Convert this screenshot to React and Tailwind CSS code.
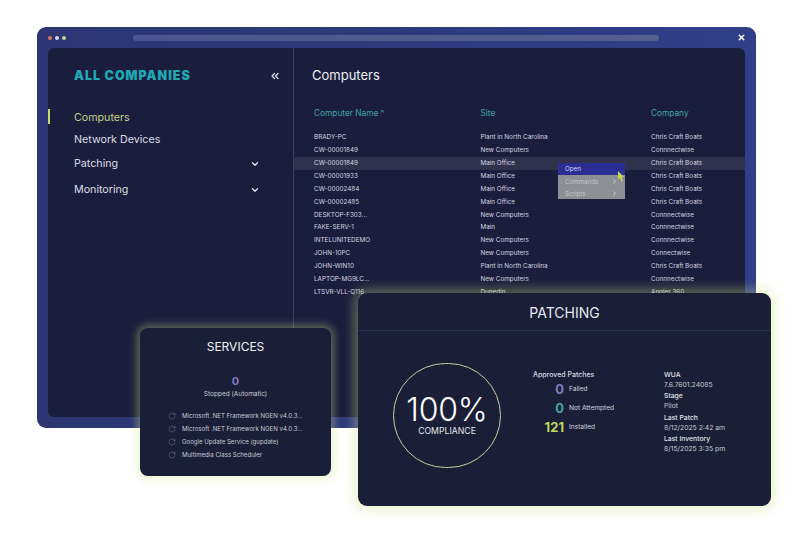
import React from "react";
import { ChevronDown, ChevronsLeft, ChevronRight, RotateCw, X } from "lucide-react";

const rows = [
  ["BRADY-PC", "Plant in North Carolina", "Chris Craft Boats"],
  ["CW-00001849", "New Computers", "Connnectwise"],
  ["CW-00001849", "Main Office", "Chris Craft Boats"],
  ["CW-00001933", "Main Office", "Chris Craft Boats"],
  ["CW-00002484", "Main Office", "Chris Craft Boats"],
  ["CW-00002485", "Main Office", "Chris Craft Boats"],
  ["DESKTOP-F303...", "New Computers", "Connnectwise"],
  ["FAKE-SERV-1", "Main", "Connnectwise"],
  ["INTELUNITEDEMO", "New Computers", "Connnectwise"],
  ["JOHN-10PC", "New Computers", "Connectwise"],
  ["JOHN-WIN10", "Plant in North Carolina", "Chris Craft Boats"],
  ["LAPTOP-MG9LC...", "New Computers", "Connnectwise"],
  ["LTSVR-VLL-Q116", "Dunedin", "Angler 360"],
];

const services = [
  "Microsoft .NET Framework NGEN v4.0.3...",
  "Microsoft .NET Framework NGEN v4.0.3...",
  "Google Update Service (gupdate)",
  "Multimedia Class Scheduler",
];

const info = [
  ["WUA", "7.6.7601.24085", "h-[21px]"],
  ["Stage", "Pilot", "h-[22px]"],
  ["Last Patch", "8/12/2025 2:42 am", "h-[21px]"],
  ["Last Inventory", "8/15/2025 3:35 pm", "h-[21px]"],
];

function NavItem({ label, active, chevron, className }) {
  return (
    <div className={`flex items-center justify-between pr-[33px] text-[10.7px] ${active ? "text-[#c3d08c]" : "text-[#dcdde6]"} ${className}`}>
      <span>{label}</span>
      {chevron && <ChevronDown size={10} strokeWidth={3} className="text-[#e4e5ec]" />}
    </div>
  );
}

function Patch({ value, label, color, size }) {
  return (
    <div className="flex items-center h-[19px]">
      <span className={`w-[31px] text-right font-bold leading-none ${size} ${color}`}>{value}</span>
      <span className="ml-[5px] text-[6.6px] text-[#d5d7e0]">{label}</span>
    </div>
  );
}

export default function App() {
  return (
    <div className="relative w-[800px] h-[533px] overflow-hidden bg-white pt-[27px] pl-[37px] font-['Inter',sans-serif] text-white">
      {/* main window */}
      <div className="w-[719px] h-[401px] rounded-[9px] bg-gradient-to-r from-[#2b3672] to-[#2f3f88] px-[11px]">
        <div className="flex h-[21px] items-center">
          <div className="flex w-[84.5px] shrink-0 gap-[3px] pt-[1px]">
            <span className="size-[4px] rounded-full bg-[#d8745f]" />
            <span className="size-[4px] rounded-full bg-[#cfd8ee]" />
            <span className="size-[4px] rounded-full bg-[#c5d89a]" />
          </div>
          <div className="h-[6px] w-[526px] shrink-0 rounded-full bg-gradient-to-r from-[#4a5590] to-[#55608f]" />
          <X size={9} strokeWidth={4} className="ml-[78px] shrink-0 text-white" />
        </div>
        <div className="flex h-[369px] rounded-[6px] bg-[#1b1d3c]">
          {/* sidebar */}
          <div className="relative w-[246px] shrink-0 border-r border-[#3a3d5c] pl-[26px]">
            <div className="flex h-[56px] items-start justify-between pt-[22px] pr-[12px]">
              <span className="text-[12.5px] font-black leading-none tracking-[1px] text-[#20a9b4]">ALL COMPANIES</span>
              <ChevronsLeft size={12} strokeWidth={2.5} className="text-[#e4e5ec]" />
            </div>
            <NavItem label="Computers" active className="mt-[7px] h-[14px]" />
            <NavItem label="Network Devices" className="mt-[8.5px] h-[14px]" />
            <NavItem label="Patching" chevron className="mt-[9.5px] h-[14px]" />
            <NavItem label="Monitoring" chevron className="mt-[12px] h-[14px]" />
            <div className="absolute left-0 top-[61px] h-[15px] w-[2px] bg-[#c6dc6a]" />
          </div>
          {/* table */}
          <div className="relative flex-1 min-w-0">
            <div className="flex h-[55px] items-center pl-[18px] text-[13px] text-[#eceef4]">Computers</div>
            <div className="grid h-[21px] grid-cols-[166.5px_170.5px_1fr] items-center pl-[20px] text-[8.3px] text-[#3fa6a8]">
              <span>Computer Name ^</span>
              <span>Site</span>
              <span>Company</span>
            </div>
            <div className="mt-[7.5px]">
              {rows.map((r, i) => (
                <div
                  key={i}
                  className={`grid h-[12.9px] grid-cols-[166.5px_170.5px_1fr] items-center pl-[20px] text-[6.35px] text-[#d3d5e0] ${i === 2 ? "bg-[#30324d]" : ""}`}
                >
                  <span>{r[0]}</span>
                  <span>{r[1]}</span>
                  <span>{r[2]}</span>
                </div>
              ))}
            </div>
            {/* context menu */}
            <div className="absolute left-[264px] top-[115px] w-[67px] text-[6.2px]">
              <div className="flex h-[12px] items-center bg-[#2b2f94] pl-[7px] text-[#d5d8f5]">Open</div>
              <div className="flex h-[13px] items-center justify-between bg-[#8c8f95] pl-[7px] pr-[7px] text-[#c4c6ca]">
                Commands <ChevronRight size={7} strokeWidth={3} className="text-[#d8dadd]" />
              </div>
              <div className="flex h-[11px] items-center justify-between bg-[#8c8f95] pl-[7px] pr-[7px] text-[#c4c6ca]">
                Scripts <ChevronRight size={7} strokeWidth={3} className="text-[#d8dadd]" />
              </div>
              <svg className="absolute left-[59px] top-[8px]" width="8" height="11" viewBox="0 0 8 11">
                <path d="M1 0 L7 6 L4.5 6.5 L6 10 L4.5 10.5 L3 7 L1 8.5 Z" fill="#c8d458" />
              </svg>
            </div>
          </div>
        </div>
      </div>

      {/* services card */}
      <div className="absolute left-[140px] top-[328px] w-[191px] h-[148px] rounded-[8px] bg-[#1a1e36] shadow-[0_0_9px_3px_rgba(205,225,130,0.4)]">
        <div className="pt-[11px] text-center text-[12px] leading-[16px] text-[#eef0f5]">SERVICES</div>
        <div className="mt-[19px] text-center text-[11px] font-bold leading-[14px] text-[#8279c4]">0</div>
        <div className="mt-[1px] text-center text-[6.5px] leading-[10px] text-[#c9cbd6]">Stopped (Automatic)</div>
        <div className="mt-[10.5px] pl-[28px]">
          {services.map((s, i) => (
            <div key={i} className="flex h-[13px] items-center text-[6.1px] text-[#c9cbd6]">
              <RotateCw size={8} strokeWidth={1} className="mr-[6px] shrink-0 text-[#a2a4b4]" />
              <span>{s}</span>
            </div>
          ))}
        </div>
      </div>

      {/* patching card */}
      <div className="absolute left-[358px] top-[293px] w-[413px] h-[213px] rounded-[9px] bg-[#1a1e36] shadow-[0_0_12px_4px_rgba(205,225,130,0.4)]">
        <div className="flex h-[38px] items-center justify-center border-b border-[#2c3050] pt-[1px] text-[14px] text-[#e6e8ef]">PATCHING</div>
        <div className="flex">
          <div className="ml-[35px] mt-[32px] flex h-[105px] w-[108px] shrink-0 flex-col items-center justify-center rounded-full border border-[#c9cfa0]">
            <div className="text-[32px] font-light leading-[31px] tracking-[-0.2px] text-white">100%</div>
            <div className="mt-[1px] text-[8.7px] leading-[11px] text-[#e4e6ec]">COMPLIANCE</div>
          </div>
          <div className="ml-[32px] mt-[39px] w-[131px] shrink-0">
            <div className="text-[7px] font-medium leading-[10px] text-[#d8dae3]">Approved Patches</div>
            <Patch value="0" label="Failed" color="text-[#8279c4]" size="text-[13px]" />
            <Patch value="0" label="Not Attempted" color="text-[#3fa6a8]" size="text-[13px]" />
            <Patch value="121" label="Installed" color="text-[#c3d65f]" size="text-[13px]" />
          </div>
          <div className="mt-[39px] text-[6.8px]">
            {info.map(([k, v, h]) => (
              <div key={k} className={`${h} leading-[10px]`}>
                <div className="font-medium text-[#e1e3ea]">{k}</div>
                <div className="text-[#c9cbd6]">{v}</div>
              </div>
            ))}
          </div>
        </div>
      </div>
    </div>
  );
}
